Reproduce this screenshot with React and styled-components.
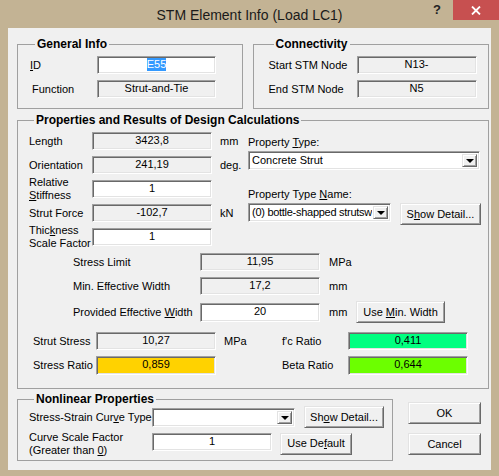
import React from "react";
import styled, { createGlobalStyle } from "styled-components";

const GlobalStyle = createGlobalStyle`
  html, body {
    margin: 0;
    padding: 0;
    background: #c3b394;
  }
  body {
    font-family: "Liberation Sans", Arial, sans-serif;
    font-size: 11px;
    color: #000;
  }
`;

const Window = styled.div`
  width: 499px;
  height: 476px;
  background: #c3b394;
  display: flex;
  flex-direction: column;
  overflow: hidden;
`;

const TitleBar = styled.div`
  height: 28px;
  display: flex;
  align-items: flex-start;
  position: relative;
`;

const Title = styled.div`
  flex: 1;
  text-align: center;
  font-size: 14px;
  line-height: 28px;
  color: #1a1a1a;
  padding-top: 1px;
`;

const TitleButtons = styled.div`
  position: absolute;
  top: 0;
  right: 0;
  display: flex;
  align-items: flex-start;
`;

const HelpGlyph = styled.div`
  width: 30px;
  height: 20px;
  font-weight: bold;
  font-size: 13px;
  line-height: 20px;
  text-align: center;
  color: #222;
  margin-right: 1px;
`;

const CloseBtn = styled.div`
  width: 46px;
  height: 20px;
  background: #c75050;
  display: flex;
  align-items: center;
  justify-content: center;
`;

const Client = styled.div`
  margin: 0 8px;
  height: 442px;
  background: #f0f0f0;
  padding: 9px 2px 0 9px;
  box-sizing: border-box;
  display: flex;
  flex-direction: column;
  gap: 4px;
`;

const Row = styled.div`
  display: flex;
  gap: ${(p) => p.$gap || 0}px;
  align-items: flex-start;
`;

const Group = styled.fieldset`
  margin: 0;
  padding: ${(p) => p.$pad || "0"};
  border: 1px solid #a0a0a0;
  box-sizing: border-box;
  width: ${(p) => p.$w}px;
  height: ${(p) => p.$h}px;
  min-width: 0;
`;

const Legend = styled.legend`
  font-weight: bold;
  font-size: 12px;
  line-height: ${(p) => p.$lh || 14}px;
  padding: 0 2px;
  margin-left: 5px;
`;

const Form = styled.div`
  display: grid;
  grid-template-columns: ${(p) => p.$cols};
  grid-auto-rows: ${(p) => p.$rows || "18px"};
  row-gap: ${(p) => p.$rgap ?? 6}px;
  align-items: center;
`;

const Label = styled.div`
  line-height: 13px;
  white-space: nowrap;
  padding-left: ${(p) => p.$pl || 0}px;
`;

const Unit = styled.div`
  padding-left: ${(p) => p.$pl || 8}px;
  white-space: nowrap;
`;

const Field = styled.div`
  width: ${(p) => p.$w || 120}px;
  height: ${(p) => p.$h || 18}px;
  box-sizing: border-box;
  background: ${(p) => p.$bg || "#f0f0f0"};
  border: 1px solid;
  border-color: #a0a0a0 #fff #fff #a0a0a0;
  box-shadow: inset 1px 1px 0 #696969, inset -1px -1px 0 #e3e3e3;
  display: flex;
  align-items: center;
  justify-content: center;
  line-height: 13px;
  padding-bottom: 1px;
`;

const Selected = styled.span`
  background: #3399ff;
  color: #fff;
`;

const Combo = styled(Field)`
  justify-content: space-between;
  background: #fff;
  padding: 0 2px 0 3px;
  width: ${(p) => p.$w}px;
  height: 19px;
`;

const ComboText = styled.span`
  white-space: nowrap;
  overflow: hidden;
  letter-spacing: ${(p) => p.$ls || 0}px;
`;

const DropBtn = styled.div`
  width: 15px;
  height: 13px;
  flex: none;
  box-sizing: border-box;
  background: #f0f0f0;
  border: 1px solid;
  border-color: #e3e3e3 #696969 #696969 #e3e3e3;
  box-shadow: inset 1px 1px 0 #fff, inset -1px -1px 0 #a0a0a0;
  display: flex;
  align-items: center;
  justify-content: center;
  &::after {
    content: "";
    border-left: 4px solid transparent;
    border-right: 4px solid transparent;
    border-top: 4px solid #000;
    margin-top: 1px;
  }
`;

const Button = styled.div`
  width: ${(p) => p.$w}px;
  height: 22px;
  flex: none;
  box-sizing: border-box;
  background: #f0f0f0;
  border: 1px solid;
  border-color: #e3e3e3 #696969 #696969 #e3e3e3;
  box-shadow: inset 1px 1px 0 #fff, inset -1px -1px 0 #a0a0a0;
  display: flex;
  align-items: center;
  justify-content: center;
  white-space: nowrap;
  padding-bottom: 1px;
`;

const U = styled.span`
  text-decoration: underline;
`;

const Stack = styled.div`
  display: flex;
  flex-direction: column;
  gap: ${(p) => p.$gap || 0}px;
  margin-top: ${(p) => p.$mt || 0}px;
  margin-left: ${(p) => p.$ml || 0}px;
`;

const RightCol = styled.div`
  display: flex;
  flex-direction: column;
  padding-top: 3px;
`;

const SmallLabel = styled.div`
  line-height: 14px;
  margin-bottom: 2px;
  margin-top: ${(p) => p.$mt || 0}px;
`;

const Span2 = styled(Row)`
  grid-column: span 2;
`;

export default function App() {
  return (
    <>
      <GlobalStyle />
      <Window>
        <TitleBar>
          <Title>STM Element Info (Load LC1)</Title>
          <TitleButtons>
            <HelpGlyph>?</HelpGlyph>
            <CloseBtn>
              <svg width="10" height="9" viewBox="0 0 10 9">
                <path d="M1 0.5 L9 8.5 M9 0.5 L1 8.5" stroke="#fff" strokeWidth="1.8" />
              </svg>
            </CloseBtn>
          </TitleButtons>
        </TitleBar>
        <Client>
          <Row $gap={10}>
            <Group $w={226} $h={72} $pad="5px 0 0 12px">
              <Legend>General Info</Legend>
              <Form $cols="67px 120px" $rgap={6}>
                <Label><U>I</U>D</Label>
                <Field $w={119} $bg="#fff">
                  <Selected>E55</Selected>
                </Field>
                <Label $pl={2}>Function</Label>
                <Field $w={119}>Strut-and-Tie</Field>
              </Form>
            </Group>
            <Group $w={237} $h={72} $pad="5px 0 0 15px">
              <Legend>Connectivity</Legend>
              <Form $cols="88px 120px" $rgap={6}>
                <Label>Start STM Node</Label>
                <Field>N13-</Field>
                <Label>End STM Node</Label>
                <Field>N5</Field>
              </Form>
            </Group>
          </Row>

          <Group $w={472} $h={276} $pad="5px 0 0 11px">
            <Legend>Properties and Results of Design Calculations</Legend>
            <Row>
              <Form $cols="63px 120px 36px" $rgap={6}>
                <Label>Length</Label>
                <Field>3423,8</Field>
                <Unit>mm</Unit>
                <Label>Orientation</Label>
                <Field>241,19</Field>
                <Unit>deg.</Unit>
                <Label>
                  Relative
                  <br />
                  <U>S</U>tiffness
                </Label>
                <Field $bg="#fff">1</Field>
                <span />
                <Label>Strut Force</Label>
                <Field>-102,7</Field>
                <Unit>kN</Unit>
                <Label>
                  Thic<U>k</U>ness
                  <br />
                  Scale Factor
                </Label>
                <Field $bg="#fff">1</Field>
                <span />
              </Form>
              <RightCol>
                <SmallLabel>
                  Property <U>T</U>ype:
                </SmallLabel>
                <Combo $w={232}>
                  <ComboText>Concrete Strut</ComboText>
                  <DropBtn />
                </Combo>
                <SmallLabel $mt={17}>
                  Property Type <U>N</U>ame:
                </SmallLabel>
                <Row $gap={9}>
                  <Combo $w={143}>
                    <ComboText $ls={-0.28}>(0) bottle-shapped strutsw</ComboText>
                    <DropBtn />
                  </Combo>
                  <Button $w={81}>
                    <span>S<U>h</U>ow Detail...</span>
                  </Button>
                </Row>
              </RightCol>
            </Row>

            <Stack $gap={9} $mt={7}>
              <Form $cols="171px 120px 36px 89px" $rows="18px 18px 22px" $rgap={6}>
                <Label $pl={44}>Stress Limit</Label>
                <Field>11,95</Field>
                <Unit $pl={9}>MPa</Unit>
                <span />
                <Label $pl={44}>Min. Effective Width</Label>
                <Field>17,2</Field>
                <Unit $pl={9}>mm</Unit>
                <span />
                <Label $pl={44}>
                  Provided Effective <U>W</U>idth
                </Label>
                <Field $bg="#fff" $h={19}>20</Field>
                <Unit $pl={9}>mm</Unit>
                <Button $w={89}>
                  <span>Use <U>M</U>in. Width</span>
                </Button>
              </Form>
              <Form $cols="67px 120px 66px 66px 120px" $rgap={6}>
                <Label $pl={4}>Strut Stress</Label>
                <Field>10,27</Field>
                <Unit>MPa</Unit>
                <Label>f'c Ratio</Label>
                <Field $bg="#00ff80">0,411</Field>
                <Label $pl={4}>Stress Ratio</Label>
                <Field $bg="#ffd200" $h={19}>0,859</Field>
                <span />
                <Label>Beta Ratio</Label>
                <Field $bg="#6cff00" $h={19}>0,644</Field>
              </Form>
            </Stack>
          </Group>

          <Row>
            <Group $w={376} $h={68} $pad="0 0 0 11px">
              <Legend $lh={13}>Nonlinear Properties</Legend>
              <Form $cols="123px 152px 80px" $rows="22px 23px" $rgap={4}>
                <Label>
                  Stress-Strain Cur<U>v</U>e Type
                </Label>
                <Combo $w={143}>
                  <ComboText />
                  <DropBtn />
                </Combo>
                <Button $w={80}>
                  <span>Sh<U>o</U>w Detail...</span>
                </Button>
                <Label>
                  Curve Scale Factor
                  <br />
                  (Greater than <U>0</U>)
                </Label>
                <Span2 $gap={8}>
                  <Field $bg="#fff">1</Field>
                  <Button $w={72}>
                    <span>Use De<U>f</U>ault</span>
                  </Button>
                </Span2>
              </Form>
            </Group>
            <Stack $gap={9} $ml={15} $mt={9}>
              <Button $w={73}>OK</Button>
              <Button $w={73}>Cancel</Button>
            </Stack>
          </Row>
        </Client>
      </Window>
    </>
  );
}
